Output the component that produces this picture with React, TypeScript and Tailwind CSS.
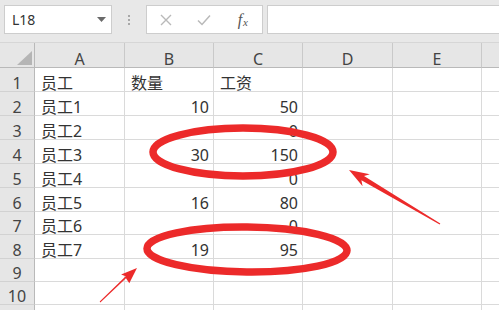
import React from "react";

const FONT = "'Noto Sans', 'Noto Sans CJK SC', sans-serif";

const colWidths = [90, 89, 89, 90, 89];
const colNames = ["A", "B", "C", "D", "E"];
const rowHeights = [24, 24, 24, 24, 24, 24, 23, 24, 23, 23, 23];

type Cell = { v: string; num?: boolean };
const data: Cell[][] = [
  [{ v: "员工" }, { v: "数量" }, { v: "工资" }],
  [{ v: "员工1" }, { v: "10", num: true }, { v: "50", num: true }],
  [{ v: "员工2" }, { v: "" }, { v: "0", num: true }],
  [{ v: "员工3" }, { v: "30", num: true }, { v: "150", num: true }],
  [{ v: "员工4" }, { v: "" }, { v: "0", num: true }],
  [{ v: "员工5" }, { v: "16", num: true }, { v: "80", num: true }],
  [{ v: "员工6" }, { v: "" }, { v: "0", num: true }],
  [{ v: "员工7" }, { v: "19", num: true }, { v: "95", num: true }],
  [],
  [],
  [],
];

function Toolbar() {
  return (
    <div className="h-[42px] bg-[#e8e8e8] flex items-start pt-[5px] pl-[4px]">
      <div className="w-[108px] h-[29px] bg-white border border-[#cdcdcd] flex items-center justify-between pl-[7px] pr-[5px]">
        <span className="text-[14px] text-[#333] leading-none" style={{ fontFamily: FONT }}>
          L18
        </span>
        <svg width="9" height="5" viewBox="0 0 9 5">
          <path d="M0 0 L9 0 L4.5 5 Z" fill="#6a6a6a" />
        </svg>
      </div>
      <div className="w-[34px] h-[29px] flex flex-col items-center justify-center gap-[2px]">
        <span className="w-[2px] h-[2px] bg-[#a8a8a8]" />
        <span className="w-[2px] h-[2px] bg-[#a8a8a8]" />
        <span className="w-[2px] h-[2px] bg-[#a8a8a8]" />
      </div>
      <div className="w-[117px] h-[29px] bg-white border border-[#cdcdcd] flex items-center">
        <span className="w-[39px] flex justify-center">
          <svg width="12" height="12" viewBox="0 0 12 12">
            <path d="M1 1 L11 11 M11 1 L1 11" stroke="#b9b9b9" strokeWidth="1.4" fill="none" />
          </svg>
        </span>
        <span className="w-[39px] flex justify-center">
          <svg width="14" height="12" viewBox="0 0 14 12">
            <path d="M1 6.5 L5 10.5 L13 1.5" stroke="#b9b9b9" strokeWidth="1.5" fill="none" />
          </svg>
        </span>
        <span
          className="w-[39px] flex justify-center items-end text-[#555] italic leading-none"
          style={{ fontFamily: "'Liberation Serif', serif" }}
        >
          <span className="text-[16px]">f</span>
          <span className="text-[11px] ml-[1px]">x</span>
        </span>
      </div>
      <div className="flex-1 h-[29px] ml-[4px] bg-white border border-r-0 border-[#cdcdcd]" />
    </div>
  );
}

function HeaderRow() {
  return (
    <div className="flex h-[26px] bg-[#e6e6e6] border-t border-[#d6d6d6]" style={{ fontFamily: FONT }}>
      <div className="w-[35px] shrink-0 border-r border-b border-[#b9b9b9] flex items-end justify-end pr-[2px] pb-[2px]">
        <svg width="15" height="14" viewBox="0 0 15 14">
          <path d="M15 0 L15 14 L0 14 Z" fill="#b5b5b5" />
        </svg>
      </div>
      {colNames.map((n, i) => (
        <div
          key={n}
          className="shrink-0 border-r border-b border-r-[#c9c9c9] border-b-[#b9b9b9] flex items-end justify-center text-[16px] leading-[16px] text-[#444]"
          style={{ width: colWidths[i] }}
        >
          {n}
        </div>
      ))}
      <div className="flex-1 border-b border-[#b9b9b9]" />
    </div>
  );
}

function DataRow({ idx, cells, h }: { idx: number; cells: Cell[]; h: number }) {
  return (
    <div className="flex" style={{ height: h, fontFamily: FONT }}>
      <div className="w-[35px] shrink-0 bg-[#e6e6e6] border-r border-r-[#b9b9b9] border-b border-b-[#d2d2d2] flex items-end justify-center text-[16px] leading-[16px] text-[#444]">
        {idx <= 10 ? idx : ""}
      </div>
      {colWidths.map((w, i) => {
        const c = cells[i];
        return (
          <div
            key={i}
            className={
              "shrink-0 border-r border-b border-[#dadada] flex items-end px-[4px] text-[16px] leading-[16px] text-[#333] whitespace-nowrap " +
              (c && c.num ? "justify-end" : "justify-start pl-[6px]")
            }
            style={{ width: w }}
          >
            {c ? c.v : ""}
          </div>
        );
      })}
      <div className="flex-1 border-b border-[#dadada]" />
    </div>
  );
}

function Overlay() {
  const red = "#ec2a2a";
  return (
    <svg className="absolute left-0 top-0 pointer-events-none" width="499" height="310" viewBox="0 0 499 310">
      <ellipse cx="243" cy="152" rx="90" ry="24" fill="none" stroke={red} strokeWidth="7.5" />
      <ellipse cx="247" cy="249.5" rx="100" ry="22.5" fill="none" stroke={red} strokeWidth="7.5" transform="rotate(0.6 247 249.5)" />
      <polygon
        points="349,170 369.8,174.2 364,176.1 440.3,223.6 439.7,224.4 361.4,180.3 362.6,186.2"
        fill={red}
      />
      <polygon
        points="137,268 129.3,283.2 126,278.3 100.3,302.4 99.7,301.6 125.7,276.3 121.1,274.4"
        fill={red}
      />
    </svg>
  );
}

export default function App() {
  return (
    <div className="relative w-[499px] h-[310px] overflow-hidden bg-white">
      <Toolbar />
      <HeaderRow />
      {rowHeights.map((h, i) => (
        <DataRow key={i} idx={i + 1} cells={data[i] || []} h={h} />
      ))}
      <Overlay />
    </div>
  );
}
